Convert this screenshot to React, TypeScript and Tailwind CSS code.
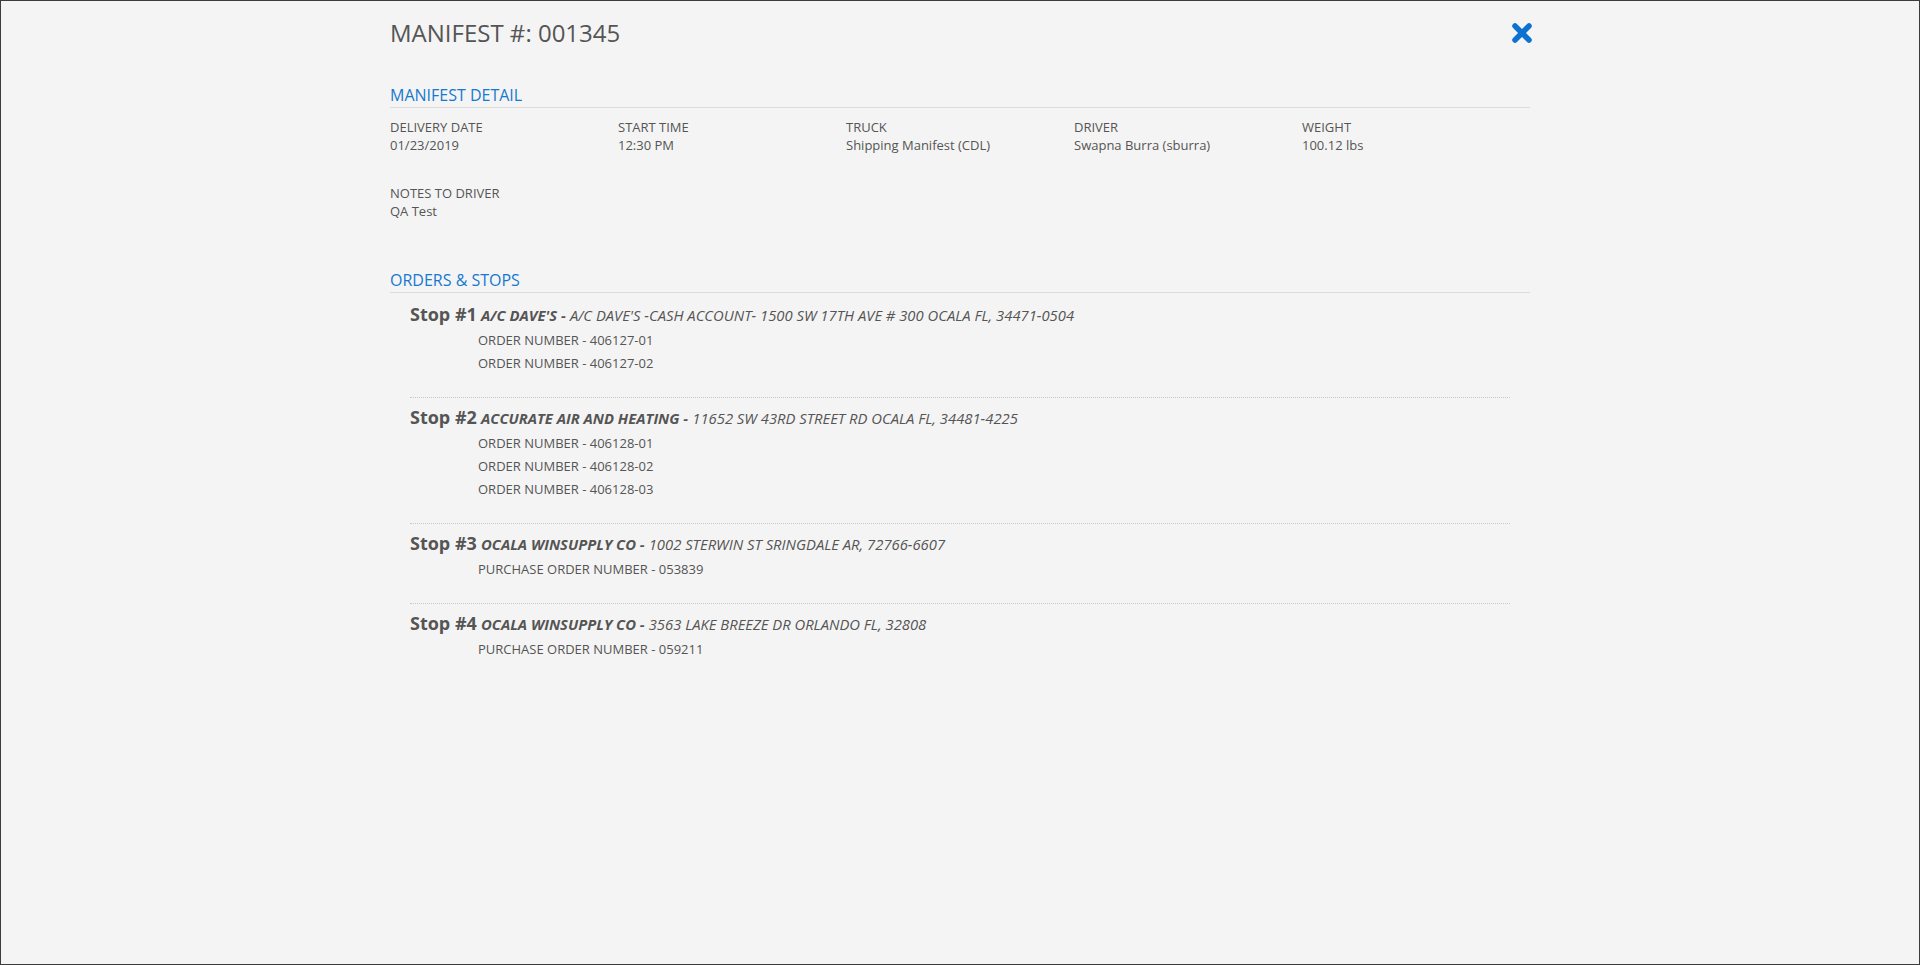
import React from "react";

type Stop = {
  number: number;
  company: string;
  address: string;
  orders: string[];
};

const details = [
  { label: "DELIVERY DATE", value: "01/23/2019" },
  { label: "START TIME", value: "12:30 PM" },
  { label: "TRUCK", value: "Shipping Manifest (CDL)" },
  { label: "DRIVER", value: "Swapna Burra (sburra)" },
  { label: "WEIGHT", value: "100.12 lbs" },
];

const stops: Stop[] = [
  {
    number: 1,
    company: "A/C DAVE'S",
    address: "A/C DAVE'S -CASH ACCOUNT- 1500 SW 17TH AVE # 300 OCALA FL, 34471-0504",
    orders: ["ORDER NUMBER - 406127-01", "ORDER NUMBER - 406127-02"],
  },
  {
    number: 2,
    company: "ACCURATE AIR AND HEATING",
    address: "11652 SW 43RD STREET RD OCALA FL, 34481-4225",
    orders: [
      "ORDER NUMBER - 406128-01",
      "ORDER NUMBER - 406128-02",
      "ORDER NUMBER - 406128-03",
    ],
  },
  {
    number: 3,
    company: "OCALA WINSUPPLY CO",
    address: "1002 STERWIN ST SRINGDALE AR, 72766-6607",
    orders: ["PURCHASE ORDER NUMBER - 053839"],
  },
  {
    number: 4,
    company: "OCALA WINSUPPLY CO",
    address: "3563 LAKE BREEZE DR ORLANDO FL, 32808",
    orders: ["PURCHASE ORDER NUMBER - 059211"],
  },
];

function CloseIcon() {
  return (
    <svg width="22" height="22" viewBox="0 0 22 22" className="text-[#0b72cf]">
      <path
        d="M4 4 L18 18 M18 4 L4 18"
        stroke="currentColor"
        strokeWidth="5.5"
        strokeLinecap="round"
      />
    </svg>
  );
}

function SectionHeading({ children }: { children: React.ReactNode }) {
  return (
    <h2 className="text-[16px] leading-[22px] text-[#1479d0] border-b border-[#dcdcdc] pb-[1px]">
      {children}
    </h2>
  );
}

export default function App() {
  return (
    <div
      className="h-[965px] w-full bg-[#f4f4f4] border border-[#3c3c3c] text-[#555555] overflow-hidden"
      style={{ fontFamily: '"Open Sans", "Noto Sans", sans-serif' }}
    >
      <div className="w-[1140px] mx-auto pt-[15px]">
        {/* title row */}
        <div className="flex items-center justify-between">
          <h1 className="text-[24px] leading-[34px] text-[#555555]">
            MANIFEST #: 001345
          </h1>
          <button className="-mr-[3px]">
            <CloseIcon />
          </button>
        </div>

        <div className="mt-[34px]">
          <SectionHeading>MANIFEST DETAIL</SectionHeading>
          <div className="grid grid-cols-5 mt-[10px] text-[13px] leading-[18px]">
            {details.map((d) => (
              <div key={d.label}>
                <div>{d.label}</div>
                <div>{d.value}</div>
              </div>
            ))}
          </div>
          <div className="mt-[30px] text-[13px] leading-[18px]">
            <div>NOTES TO DRIVER</div>
            <div>QA Test</div>
          </div>
        </div>

        <div className="mt-[49px]">
          <SectionHeading>ORDERS &amp; STOPS</SectionHeading>
          <div className="mx-5 mt-[2px]">
            {stops.map((stop, i) => (
              <div
                key={stop.number}
                className={
                  "pt-[5px] pb-[22px] " +
                  (i < stops.length - 1 ? "border-b border-dotted border-[#c8c8c8]" : "")
                }
              >
                <div className="leading-[28px] whitespace-nowrap">
                  <span className="text-[18px] font-bold">Stop #{stop.number}</span>{" "}
                  <span className="text-[14.8px] italic font-bold">{stop.company} -</span>{" "}
                  <span className="text-[14.8px] italic">{stop.address}</span>
                </div>
                <div className="pl-[68px]">
                  {stop.orders.map((o) => (
                    <div key={o} className="text-[13px] leading-[23px]">
                      {o}
                    </div>
                  ))}
                </div>
              </div>
            ))}
          </div>
        </div>
      </div>
    </div>
  );
}
